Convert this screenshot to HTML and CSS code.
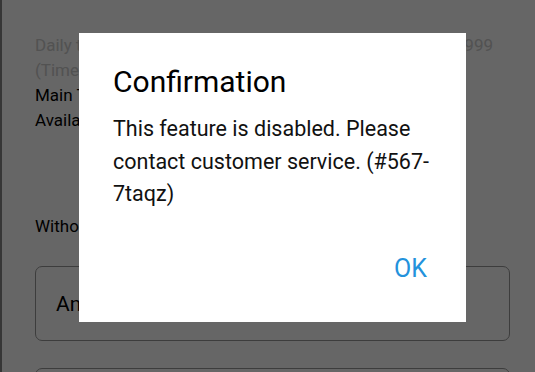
FILE: index.html
```html
<!DOCTYPE html>
<html>
<head>
<meta charset="utf-8">
<link rel="stylesheet" href="styles.css">
</head>
<body>
<div class="page">
  <div class="info">
    <div class="row muted"><span>Daily transaction limit</span><span>999</span></div>
    <div class="row muted"><span>(Times)</span></div>
    <div class="row"><span>Main Total</span></div>
    <div class="row"><span>Available</span></div>
  </div>
  <div class="label">Without</div>
  <div class="field">Amount</div>
  <div class="field"></div>
</div>
<div class="overlay">
  <div class="dialog">
    <h2 class="title">Confirmation</h2>
    <p class="message">This feature is disabled. Please contact customer service. (#567-7taqz)</p>
    <div class="actions"><button class="ok">OK</button></div>
  </div>
</div>
</body>
</html>
```
FILE: styles.css
```css
html, body {
  margin: 0;
  padding: 0;
  width: 535px;
  height: 372px;
  overflow: hidden;
  font-family: Roboto, "Noto Sans", sans-serif;
}
body {
  position: relative;
  background: #fff;
}
.page {
  border-left: 2px solid #888;
  height: 372px;
  box-sizing: border-box;
  padding: 33px 25px 0 33px;
  color: #000;
  overflow: hidden;
}
.info {
  font-size: 17px;
  line-height: 25px;
}
.row {
  display: flex;
  justify-content: space-between;
  padding-right: 17px;
}
.muted {
  color: #ccc;
}
.label {
  font-size: 17px;
  margin-top: 81px;
  line-height: 25px;
}
.field {
  margin-top: 27px;
  height: 75px;
  border: 1px solid #999;
  border-radius: 7px;
  box-sizing: border-box;
  font-size: 21px;
  padding: 0 20px;
  display: flex;
  align-items: center;
}
.field + .field {
  margin-top: 27px;
}
.overlay {
  position: absolute;
  inset: 0;
  background: rgba(0, 0, 0, 0.6);
}
.dialog {
  position: absolute;
  left: 79px;
  top: 33px;
  width: 387px;
  height: 289px;
  background: #fff;
  box-sizing: border-box;
  padding: 31px 34px 0 34px;
}
.title {
  margin: 0;
  font-weight: 400;
  font-size: 30px;
  line-height: 36px;
  color: #000;
}
.message {
  margin: 13px 0 0 0;
  font-size: 21.5px;
  line-height: 32.5px;
  color: #111;
}
.actions {
  display: flex;
  justify-content: flex-end;
  margin-top: 43px;
}
.ok {
  border: none;
  background: none;
  padding: 0;
  margin-right: 5px;
  font-family: inherit;
  font-size: 25px;
  line-height: 29px;
  color: #2392dc;
}
```
